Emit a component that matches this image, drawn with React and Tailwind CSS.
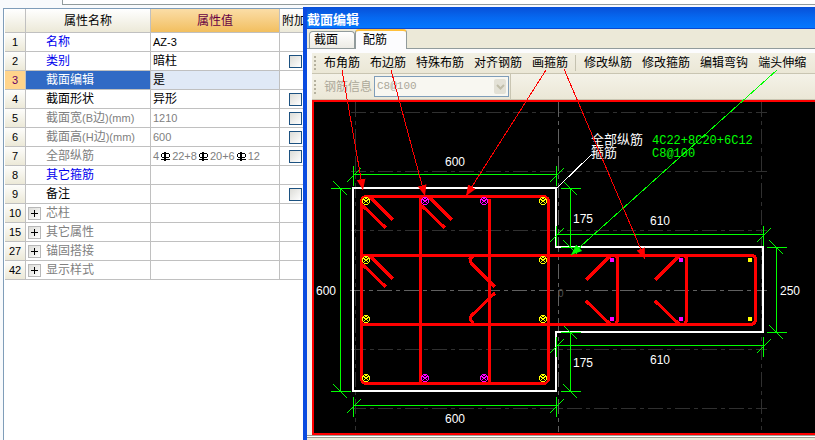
import { useState } from 'react';

const ROWS = [
    { no: 1, name: '名称', value: 'AZ-3', tone: 'blue' },
    { no: 2, name: '类别', value: '暗柱', tone: 'blue', extra: true },
    { no: 3, name: '截面编辑', value: '是', tone: 'black' },
    { no: 4, name: '截面形状', value: '异形', tone: 'black', extra: true },
    { no: 5, name: '截面宽', suffix: ['(B', '边', ')(mm)'], value: '1210', tone: 'gray', extra: true },
    { no: 6, name: '截面高', suffix: ['(H', '边', ')(mm)'], value: '600', tone: 'gray', extra: true },
    { no: 7, name: '全部纵筋', bars: ['4', '22+8', '20+6', '12'], tone: 'gray', extra: true },
    { no: 8, name: '其它箍筋', tone: 'blue' },
    { no: 9, name: '备注', tone: 'black', extra: true },
    { no: 10, name: '芯柱', tone: 'gray', group: true },
    { no: 15, name: '其它属性', tone: 'gray', group: true },
    { no: 27, name: '锚固搭接', tone: 'gray', group: true },
    { no: 42, name: '显示样式', tone: 'gray', group: true },
];

const TONES = {
    blue: 'text-[#0000ee]',
    black: 'text-black',
    gray: 'text-[#808080]',
};

const TOOLS_LEFT = ['布角筋', '布边筋', '特殊布筋', '对齐钢筋', '画箍筋'];
const TOOLS_RIGHT = ['修改纵筋', '修改箍筋', '编辑弯钩', '端头伸缩'];

const CJK = "font-['Liberation_Sans','Noto_Sans_CJK_SC',sans-serif]";

function RebarSymbol() {
    return (
        <svg width="9" height="9" viewBox="0 0 9 9" className="mx-0.5 shrink-0" shapeRendering="crispEdges">
            <path d="M4 0h1v9h-1zM1 1h7v1H1zM0 2h1v3H0zM8 2h1v3H8zM1 5h7v1H1zM0 7h9v1H0zM3 0h1v9H3z" fill="#000" />
        </svg>
    );
}

function PropertyRow({ row, selected, onSelect }) {
    const [checked, setChecked] = useState(false);
    const cell = 'h-[19px] overflow-hidden border-r border-b border-[#c0c0c0] p-0';

    return (
        <tr onClick={() => onSelect(row.no)}>
            <th
                scope="row"
                className={`${cell} text-center text-[11px] font-normal ${selected ? 'bg-[#ffd48c] text-[#660066]' : 'bg-linear-to-b from-[#fdfdfb] to-[#ece9d8] text-black'}`}
            >
                {row.no}
            </th>
            <td className={`${cell} ${selected ? 'bg-[#316ac5] text-white' : TONES[row.tone]}`}>
                <div className="flex h-[18px] items-center">
                    <div className="flex w-5 pl-0.5">
                        {row.group && (
                            <button type="button" aria-label={`展开${row.name}`} className="grid size-[13px] place-items-center border border-[#b8b8b8] bg-linear-to-br from-[#dcdcd8] to-white">
                                <svg width="7" height="7" viewBox="0 0 7 7" shapeRendering="crispEdges">
                                    <path d="M3 0h1v7H3zM0 3h7v1H0z" fill="#000" />
                                </svg>
                            </button>
                        )}
                    </div>
                    <span>{row.name}</span>
                    {row.suffix && (
                        <>
                            <span className="text-[11px]">{row.suffix[0]}</span>
                            <span>{row.suffix[1]}</span>
                            <span className="text-[11px]">{row.suffix[2]}</span>
                        </>
                    )}
                </div>
            </td>
            <td className={`${cell} ${selected ? 'bg-[#e0e9f6]' : ''} ${row.tone === 'gray' ? 'text-[#808080]' : 'text-black'}`}>
                <div className="flex h-[18px] items-center pl-0.5">
                    {row.bars ? (
                        row.bars.map((part, i) => (
                            <span key={i} className="flex items-center text-[11px]">
                                {i > 0 && <RebarSymbol />}
                                {part}
                            </span>
                        ))
                    ) : (
                        <span className={/^[\x00-\x7f]+$/.test(row.value || '') ? 'text-[11px]' : ''}>{row.value}</span>
                    )}
                </div>
            </td>
            <td className={`${cell} pl-[9px]`}>
                {row.extra && (
                    <input
                        type="checkbox"
                        aria-label={`附加${row.name}`}
                        checked={checked}
                        onChange={(e) => setChecked(e.target.checked)}
                        className="block size-[13px] appearance-none border border-[#1c5180] bg-linear-to-br from-[#dcdcd7] to-white checked:bg-[#316ac5]"
                    />
                )}
            </td>
        </tr>
    );
}

function PropertyTable() {
    const [selected, setSelected] = useState(3);
    const head = 'h-6 border-r border-b border-[#c0c0c0] p-0 font-normal';

    return (
        <table className="w-[315px] table-fixed border-separate border-spacing-0 text-[12px] leading-[18px]">
            <colgroup>
                <col className="w-[21px]" />
                <col className="w-[125px]" />
                <col className="w-[129px]" />
                <col className="w-[40px]" />
            </colgroup>
            <thead>
                <tr>
                    <th aria-label="序号" className={`${head} bg-linear-to-b from-white to-[#ece9d8]`}></th>
                    <th scope="col" className={`${head} bg-linear-to-b from-white to-[#ece9d8]`}>属性名称</th>
                    <th scope="col" className={`${head} bg-linear-to-b from-[#fbdda6] to-[#f2bf5e] text-[#660044]`}>属性值</th>
                    <th scope="col" className={`${head} bg-linear-to-b from-white to-[#ece9d8] pl-0.5 text-left`}>附加</th>
                </tr>
            </thead>
            <tbody>
                {ROWS.map((row) => (
                    <PropertyRow key={row.no} row={row} selected={row.no === selected} onSelect={setSelected} />
                ))}
            </tbody>
        </table>
    );
}

function Grip() {
    return (
        <div className="mr-[7px] flex w-[3px] flex-col gap-0.5">
            <i className="size-[2px] bg-[#b5b19f]"></i>
            <i className="size-[2px] bg-[#b5b19f]"></i>
            <i className="size-[2px] bg-[#b5b19f]"></i>
            <i className="size-[2px] bg-[#b5b19f]"></i>
        </div>
    );
}

const HOOKS = [[0, 0], [59, 0], [0, 59]];
const CORNER_BARS = [201, 260, 319, 378].flatMap((y) => [[366, y], [543, y]]);
const EDGE_BARS = [[425, 201], [484, 201], [425, 378], [484, 378]];
const SMALL_BARS = [[612, 260], [681, 260], [612, 319], [681, 319]];

function Bar({ x, y, color }) {
    return (
        <g stroke={color} fill="none" strokeWidth="1">
            <circle cx={x} cy={y} r="3.5" fill="#000" />
            <path d={`M${x - 3} ${y - 2}l3 2l3 -2M${x - 2} ${y + 2}l2 -2l2 2M${x - 1} ${y - 3}h2`} />
        </g>
    );
}

// horizontal dimension line with its end ticks
function DimH({ x1, x2, y }) {
    return (
        <path d={`M${x1} ${y}H${x2}M${x1} ${y - 9}v20M${x2} ${y - 9}v20M${x1 - 7} ${y + 8}l14 -14M${x2 - 7} ${y + 8}l14 -14`} />
    );
}

function DimV({ y1, y2, x }) {
    return (
        <path d={`M${x} ${y1}V${y2}M${x - 10} ${y1}h20M${x - 10} ${y2}h20M${x - 7} ${y1 - 7}l14 14M${x - 7} ${y2 - 7}l14 14`} />
    );
}

function SectionDrawing() {
    return (
        <svg width="503" height="331" viewBox="314 102 503 331" className="block max-w-none">
            <g shapeRendering="crispEdges" fill="none">
                {/* axis grid */}
                <g stroke="#303030" strokeDasharray="15 4 4 4">
                    <path d="M351 112.5H767M351 171.5H767M351 230.5H767M351 349.5H767M351 408.5H767M355.5 102V430M761.5 102V430" />
                    <path d="M350 290.5H767M558.5 102V432" stroke="#606060" />
                </g>

                {/* concrete outline */}
                <path d="M353 188H556V247H763V332H556V391H353Z" stroke="#fff" strokeWidth="2" />

                <g stroke="#0f0">
                    <DimH x1={353.5} x2={556.5} y={174.5} />
                    <DimH x1={353.5} x2={556.5} y={405.5} />
                    <DimH x1={556.5} x2={763.5} y={234.5} />
                    <DimH x1={556.5} x2={763.5} y={345.5} />
                    <DimV y1={188.5} y2={391.5} x={340.5} />
                    <DimV y1={188.5} y2={247.5} x={570.5} />
                    <DimV y1={332.5} y2={391.5} x={570.5} />
                    <DimV y1={247.5} y2={332.5} x={776.5} />
                </g>

                {/* stirrups */}
                <g stroke="#f00" strokeWidth="3">
                    <rect x="361.5" y="196.5" width="187" height="187" rx="5" />
                    <path d="M420.5 197V383M489.5 199V383" />
                    <path d="M361.5 255.5H751.5Q755.5 255.5 755.5 260V319Q755.5 324.5 750.5 324.5H361.5" />
                    <path d="M610 255.5H613Q617.5 255.5 617.5 260V319Q617.5 324.5 613 324.5M679 255.5H682Q686.5 255.5 686.5 260V319Q686.5 324.5 682 324.5" />
                </g>
                <g stroke="#f00" strokeWidth="3">
                    {HOOKS.map(([dx, dy]) => (
                        <path key={`${dx}-${dy}`} d={`M${363 + dx} ${206 + dy}l23 22M${370 + dx} ${197 + dy}l23 23`} />
                    ))}
                    <path d="M474 255L470 259L471 263L495 287M495 293L471 316L470 319L473 323" />
                    <path d="M610 256L586 280M586 301L610 324M679 256L655 280M655 301L679 324" />
                </g>

                {CORNER_BARS.map(([x, y]) => <Bar key={`${x}-${y}`} x={x} y={y} color="#ff0" />)}
                {EDGE_BARS.map(([x, y]) => <Bar key={`${x}-${y}`} x={x} y={y} color="#f0f" />)}
                {SMALL_BARS.map(([x, y]) => <rect key={`${x}-${y}`} x={x - 1} y={y - 1} width="2" height="2" stroke="#f0f" strokeWidth="2" />)}
                <rect x="749" y="259" width="2" height="2" stroke="#ff0" strokeWidth="2" />
                <rect x="749" y="318" width="2" height="2" stroke="#ff0" strokeWidth="2" />

                <path d="M557 188L592 154" stroke="#fff" />
            </g>

            <g className="font-['Liberation_Sans','Noto_Sans_CJK_SC',sans-serif] text-[12px]" fill="#fff">
                <text x="445" y="166">600</text>
                <text x="316" y="295">600</text>
                <text x="445" y="423">600</text>
                <text x="573" y="223">175</text>
                <text x="650" y="225">610</text>
                <text x="573" y="367">175</text>
                <text x="650" y="364">610</text>
                <text x="780" y="295">250</text>
                <text x="558" y="297" fill="#505050" className="text-[10px]">0</text>
                <text x="591" y="144" className="text-[13px]">全部纵筋</text>
                <text x="591" y="157" className="text-[13px]">箍筋</text>
            </g>
            <g className="font-['Liberation_Mono',monospace] text-[12px]" fill="#0f0">
                <text x="652" y="144">4C22+8C20+6C12</text>
                <text x="652" y="157">C8@100</text>
            </g>
        </svg>
    );
}

// leaders running from the toolbar commands down to the bars they create
function Leaders() {
    return (
        <svg width="512" height="433" viewBox="303 7 512 433" className="pointer-events-none absolute top-0 left-0">
            <defs>
                <marker id="tip-red" viewBox="0 0 10 10" refX="10" refY="5" markerWidth="11" markerHeight="11" orient="auto" markerUnits="userSpaceOnUse">
                    <path d="M0 1L10 5L0 9Z" fill="#f00" />
                </marker>
                <marker id="tip-green" viewBox="0 0 10 10" refX="10" refY="5" markerWidth="11" markerHeight="11" orient="auto" markerUnits="userSpaceOnUse">
                    <path d="M0 1L10 5L0 9Z" fill="#0f0" />
                </marker>
            </defs>
            <g stroke="#f00" fill="none" shapeRendering="crispEdges">
                <path d="M342 70L363 190" markerEnd="url(#tip-red)" />
                <path d="M391 70L425 196" markerEnd="url(#tip-red)" />
                <path d="M546 70L466 196" markerEnd="url(#tip-red)" />
                <path d="M564 69L645 259" markerEnd="url(#tip-red)" />
                <path d="M777 70L571 255" stroke="#0f0" markerEnd="url(#tip-green)" />
            </g>
        </svg>
    );
}

function SectionEditor() {
    const [tab, setTab] = useState('配筋');

    return (
        <section className="relative min-w-0 flex-1 overflow-hidden border-l-4 border-[#0a4be0] bg-[#ece9d8]">
            <h1 className="h-[22px] border-b border-[#0a48d0] bg-linear-to-b from-[#0850d8] via-[#0668f0] to-[#0478ff] text-[13px] leading-[25px] font-bold text-white">
                截面编辑
            </h1>

            <div role="tablist" className="flex h-5 items-end border-b border-[#919b9c] pl-0.5 text-[12px]">
                {['截面', '配筋'].map((name) => (
                    <button
                        key={name}
                        type="button"
                        role="tab"
                        aria-selected={tab === name}
                        onClick={() => setTab(name)}
                        className={
                            tab === name
                                ? '-mb-px h-5 w-[52px] rounded-t-sm border-x border-t-2 border-x-[#919b9c] border-t-[#ffc03c] bg-[#fcfcfe] pr-3 leading-[16px]'
                                : 'h-[17px] w-[46px] rounded-t-sm border border-b-0 border-[#919b9c] bg-linear-to-b from-white to-[#ecebe5] pr-3 leading-[17px]'
                        }
                    >
                        {name}
                    </button>
                ))}
            </div>

            <div className="bg-[#fcfcfe] pt-1 pl-[5px] text-[12px]">
                <div role="toolbar" className="flex h-[21px] items-center border-b border-[#c9c5b2] bg-linear-to-b from-[#f2f0e4] to-[#ebe7d6] pl-0.5 whitespace-nowrap">
                    <Grip />
                    <div className="flex gap-2.5 leading-[18px]">
                        {TOOLS_LEFT.map((name) => <button key={name} type="button">{name}</button>)}
                    </div>
                    <div className="mr-2 ml-[7px] h-4 w-px shrink-0 bg-[#c5c2b0]"></div>
                    <div className="flex gap-2.5 leading-[18px]">
                        {TOOLS_RIGHT.map((name) => <button key={name} type="button">{name}</button>)}
                    </div>
                </div>
                <div role="toolbar" className="flex h-[26px] items-center border-b border-[#c9c5b2] bg-linear-to-b from-[#f4f2e8] to-[#ebe7d6] pl-0.5 text-[#aca899]">
                    <Grip />
                    <label htmlFor="rebar" className="leading-[18px]">钢筋信息</label>
                    <div className="relative ml-0.5 w-[135px]">
                        <select id="rebar" disabled className="block h-[21px] w-full appearance-none border border-[#7f9db9] bg-[#f8f7f1] pl-0.5 font-['Liberation_Mono',monospace] text-[11px] text-[#aca899] opacity-100">
                            <option>C8@100</option>
                        </select>
                        <span className="pointer-events-none absolute top-[3px] right-[3px] grid h-[15px] w-3 place-items-center rounded-xs bg-[#e3e1d6]">
                            <svg width="9" height="6" viewBox="0 0 9 6">
                                <path d="M1 1L4.5 4.5L8 1" fill="none" stroke="#c0bda9" strokeWidth="2" />
                            </svg>
                        </span>
                    </div>
                    <div className="ml-px h-full w-px bg-[#c9c5b2]"></div>
                </div>
            </div>

            <div className="bg-[#f4f1ec] pl-[5px]">
                <div className="overflow-hidden border-2 border-r-0 border-[#f00] bg-black">
                    <SectionDrawing />
                </div>
            </div>
            <div className="h-[3px] border-y border-[#9c9a90] bg-white"></div>

            <div className="absolute top-0 -left-1">
                <Leaders />
            </div>
        </section>
    );
}

function App() {
    return (
        <div className={`flex min-h-screen flex-col overflow-hidden bg-[#f8fafc] text-black ${CJK}`}>
            <div className="pl-[62px]">
                <div className="h-[5px] border-b border-l border-[#919b9c] bg-white"></div>
            </div>
            <div className="flex flex-1 pt-0.5">
                <div className="mt-px ml-[3px] w-[300px] shrink-0 overflow-hidden border-t border-l border-[#7f9db9] bg-white pl-px">
                    <PropertyTable />
                </div>
                <SectionEditor />
            </div>
        </div>
    );
}

export default App;
